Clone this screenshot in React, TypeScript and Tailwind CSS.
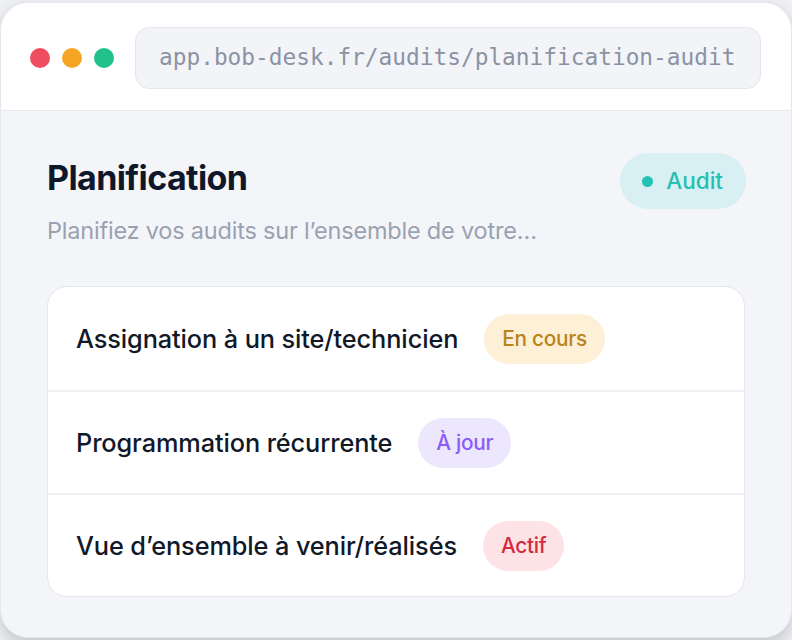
import React from "react";

const rows = [
  { label: "Assignation à un site/technicien", badge: "En cours", cls: "bg-[#fdf0d6] text-[#b8841b]" },
  { label: "Programmation récurrente", badge: "À jour", cls: "bg-[#ede7fd] text-[#8b5cf6]" },
  { label: "Vue d’ensemble à venir/réalisés", badge: "Actif", cls: "bg-[#fde3e6] text-[#d32a40]" },
];

export default function App() {
  return (
    <div className="w-[792px] h-[640px] overflow-hidden bg-[#eef0f4] pt-[2px]" style={{ fontFamily: "Inter, 'Noto Sans', sans-serif" }}>
      <div className="h-[636px] rounded-[28px] bg-[#f4f5f9] border border-[#e6e8ee] shadow-[0_6px_14px_rgba(0,0,0,0.18)] overflow-hidden flex flex-col">
        <div className="h-[108px] bg-white border-b border-[#e7e9ee] flex items-center pl-[29px] pr-[30px] gap-[21px] shrink-0">
          <div className="flex gap-[12px] mt-[2px]">
            <span className="w-[20px] h-[20px] rounded-full bg-[#ef4d60]" />
            <span className="w-[20px] h-[20px] rounded-full bg-[#f5a524]" />
            <span className="w-[20px] h-[20px] rounded-full bg-[#21c18b]" />
          </div>
          <div className="flex-1 h-[62px] mt-[2px] rounded-[14px] bg-[#f3f4f8] border border-[#e4e6ec] flex items-center pl-[23px]">
            <span className="text-[22.8px] text-[#8b92a3] whitespace-nowrap" style={{ fontFamily: "'DejaVu Sans Mono', 'Liberation Mono', monospace" }}>
              app.bob-desk.fr/audits/planification-audit
            </span>
          </div>
        </div>
        <div className="px-[46px] pt-[42px]">
          <div className="flex items-start justify-between">
            <div>
              <h1 className="text-[34px] leading-[40px] font-bold tracking-[-0.6px] text-[#0f172a] mt-[5px]">Planification</h1>
              <p className="mt-[19px] text-[23.5px] leading-[28px] text-[#9aa1b1] tracking-[-0.2px]">Planifiez vos audits sur l’ensemble de votre…</p>
            </div>
            <div className="h-[56px] pl-[22px] pr-[23px] rounded-full bg-[#d8f0f3] flex items-center gap-[13px] -mr-[1px]">
              <span className="w-[11px] h-[11px] rounded-full bg-[#22c3b4]" />
              <span className="text-[22.5px] font-medium text-[#23c1b2]">Audit</span>
            </div>
          </div>
          <div className="mt-[41px] bg-white border border-[#e4e6ec] rounded-[20px] overflow-hidden">
            {rows.map((r, i) => (
              <div key={r.label} className={`h-[103px] flex items-center pl-[28px] gap-[26px] ${i > 0 ? "border-t-2 border-[#eef0f4]" : ""}`}>
                <span className="text-[25.3px] font-medium text-[#111827] tracking-[-0.1px]">{r.label}</span>
                <span className={`h-[50px] px-[18px] rounded-full flex items-center text-[20.8px] font-medium tracking-[-0.3px] ${r.cls}`}>{r.badge}</span>
              </div>
            ))}
          </div>
        </div>
      </div>
    </div>
  );
}
